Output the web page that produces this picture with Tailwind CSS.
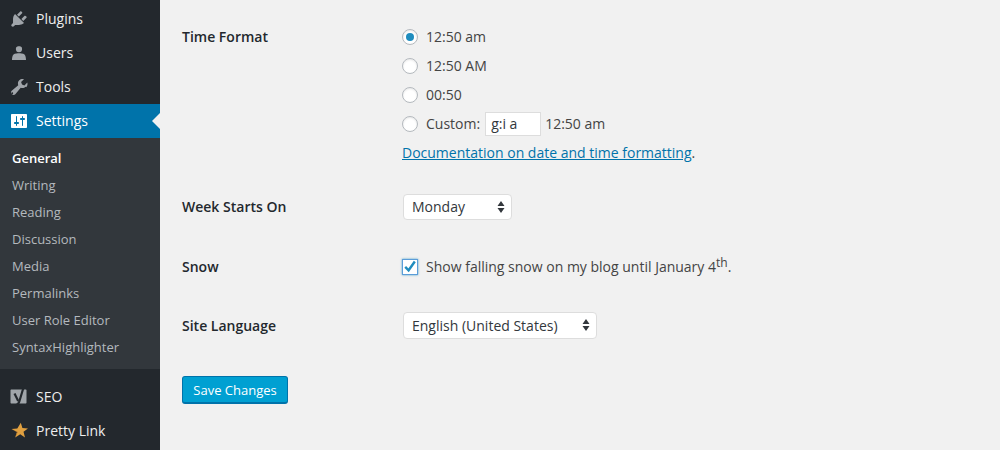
<!DOCTYPE html>
<html lang="en">
<head>
  <meta charset="UTF-8" />
  <title>General Settings</title>
  <script src="https://cdn.jsdelivr.net/npm/@tailwindcss/browser@4"></script>
</head>
<body class="bg-[#f1f1f1] h-[450px] overflow-hidden flex font-['Open_Sans',sans-serif] text-sm text-[#444]">
  <!-- admin sidebar -->
  <aside class="w-[160px] h-[450px] shrink-0 bg-[#23282d] pt-[2px] text-[#eee] text-sm">
    <a class="h-[34px] flex items-center">
      <svg class="w-5 h-5 ml-[9px] mr-[7px] text-[#a0a5aa]" viewBox="0 0 20 20" fill="currentColor"><path d="M13.110 4.360L9.870 7.600 8 5.730l3.240-3.240c.35-.34 1.050-.2 1.560.32.520.510.660 1.210.310 1.550zm-8 1.770l.91-1.120 9.010 9.010-1.190.84c-.710.710-2.630 1.160-3.820 1.160H6.140L4.900 17.260c-.59.590-1.540.59-2.120 0-.59-.58-.59-1.530 0-2.120l1.240-1.240v-3.880c0-1.130.4-3.050 1.090-3.890zm7.260 3.970l3.240-3.240c.34-.35 1.040-.21 1.550.31.520.510.660 1.210.310 1.550l-3.240 3.250z"/></svg>
      <span>Plugins</span>
    </a>
    <a class="h-[34px] flex items-center">
      <svg class="w-5 h-5 ml-[9px] mr-[7px] text-[#a0a5aa]" viewBox="0 0 20 20" fill="currentColor"><path d="M10 9.250c-2.270 0-2.900-1.580-3.030-2.620-.13-1.040-.37-3.430 3.030-3.430s3.160 2.390 3.030 3.430c-.13 1.040-.76 2.620-3.030 2.620zm0 .980s4.090-.09 5.500 1.300c1.410 1.390 1.500 4.470 1.500 5.470H3c0-1 .09-4.080 1.500-5.470 1.410-1.390 5.500-1.300 5.500-1.300z"/></svg>
      <span>Users</span>
    </a>
    <a class="h-[34px] flex items-center">
      <svg class="w-5 h-5 ml-[9px] mr-[7px] text-[#a0a5aa]" viewBox="0 0 20 20" fill="currentColor"><path fill-rule="evenodd" d="M16.680 9.770c-1.340 1.340-3.300 1.670-4.950.99l-5.410 6.520c-.99.990-2.590.990-3.580 0s-.99-2.590 0-3.570l6.520-5.420c-.68-1.650-.35-3.610.99-4.950 1.280-1.280 3.120-1.640 4.720-1.090l-2.870 2.870.94 2.360 2.360.94 2.870-2.870c.55 1.600.19 3.440-1.090 4.720zm-14.090 7.130c.37.370.96.370 1.330 0 .37-.37.37-.96 0-1.330-.37-.37-.96-.37-1.330 0-.37.37-.37.960 0 1.330z"/></svg>
      <span>Tools</span>
    </a>
    <a class="relative h-[34px] flex items-center bg-[#0073aa] text-white">
      <svg class="w-5 h-5 ml-[9px] mr-[7px]" viewBox="0 0 20 20" fill="currentColor"><path d="M18 16V4c0-.55-.45-1-1-1H3c-.55 0-1 .45-1 1v12c0 .55.45 1 1 1h14c.55 0 1-.45 1-1zM8 11h1c.55 0 1 .45 1 1s-.45 1-1 1H8v1.500c0 .280-.22.5-.5.5s-.5-.22-.5-.5V13H6c-.55 0-1-.45-1-1s.45-1 1-1h1V5.500c0-.28.22-.5.5-.5s.5.22.5.5V11zm5-2h-1c-.55 0-1-.45-1-1s.45-1 1-1h1V5.500c0-.28.22-.5.5-.5s.5.22.5.5V7h1c.55 0 1 .45 1 1s-.45 1-1 1h-1v5.500c0 .28-.22.5-.5.5s-.5-.22-.5-.5V9z"/></svg>
      <span>Settings</span>
      <span class="absolute right-0 top-1/2 -translate-y-1/2 border-y-[8px] border-r-[8px] border-y-transparent border-r-[#f1f1f1]"></span>
    </a>
    <ul class="bg-[#32373c] h-[231px] pt-[7px] text-[13px] text-[#b4b9be]">
      <li class="h-[27px] pl-3 flex items-center font-semibold text-white">General</li>
      <li class="h-[27px] pl-3 flex items-center">Writing</li>
      <li class="h-[27px] pl-3 flex items-center">Reading</li>
      <li class="h-[27px] pl-3 flex items-center">Discussion</li>
      <li class="h-[27px] pl-3 flex items-center">Media</li>
      <li class="h-[27px] pl-3 flex items-center">Permalinks</li>
      <li class="h-[27px] pl-3 flex items-center">User Role Editor</li>
      <li class="h-[27px] pl-3 flex items-center">SyntaxHighlighter</li>
    </ul>
    <a class="mt-[11px] h-[34px] flex items-center">
      <svg class="w-5 h-5 ml-[9px] mr-[7px]" viewBox="0 0 20 20"><path fill="#a0a5aa" d="M2.500 2.500h14c.6 0 1 .4 1 1v12c0 .6-.4 1-1 1H2.500c-.6 0-1-.4-1-1v-12c0-.6.4-1 1-1z"/><path fill="none" stroke="#23282d" stroke-width="2.200" d="M5.500 6.500l3.700 7.500"/><path fill="none" stroke="#23282d" stroke-width="2.200" d="M14.500 .5l-4.200 14c-.5 1.700-1.500 3.300-3.800 4"/></svg>
      <span>SEO</span>
    </a>
    <a class="h-[34px] flex items-center">
      <svg class="w-5 h-5 ml-[9px] mr-[7px]" viewBox="0 0 20 20"><path fill="#e0a040" d="M11.800 1.800l1.600 5.300 5.600.3-4.500 3.400 1.500 5.600-4.800-3.200-5 3.200 1.800-5.400-5.500-3 5.800-.6z"/><path fill="#a8702a" d="M2.500 8l5.500 3-1.800 5.400 2.600-5.300z"/></svg>
      <span>Pretty Link</span>
    </a>
  </aside>

  <!-- settings form -->
  <main class="flex-1 pl-[22px] pt-[22px]">
    <section class="flex h-[146px]">
      <div class="w-[220px] h-[29px] flex items-center font-semibold text-[#23282d]">Time Format</div>
      <div>
        <label class="h-[29px] flex items-center">
          <span class="relative w-4 h-4 mr-2 rounded-full bg-white border border-[#b4b9be] shadow-[inset_0_1px_2px_rgba(0,0,0,0.1)] flex items-center justify-center"><span class="w-2 h-2 rounded-full bg-[#1e8cbe]"></span></span>12:50 am
        </label>
        <label class="h-[29px] flex items-center">
          <span class="w-4 h-4 mr-2 rounded-full bg-white border border-[#b4b9be] shadow-[inset_0_1px_2px_rgba(0,0,0,0.1)]"></span>12:50 AM
        </label>
        <label class="h-[29px] flex items-center">
          <span class="w-4 h-4 mr-2 rounded-full bg-white border border-[#b4b9be] shadow-[inset_0_1px_2px_rgba(0,0,0,0.1)]"></span>00:50
        </label>
        <label class="h-[29px] flex items-center">
          <span class="w-4 h-4 mr-2 rounded-full bg-white border border-[#b4b9be] shadow-[inset_0_1px_2px_rgba(0,0,0,0.1)]"></span>Custom:
          <input value="g:i a" class="w-[56px] h-[24px] ml-[5px] mr-[4px] px-[5px] bg-white border border-[#ddd] text-[#32373c] outline-none" />
          12:50 am
        </label>
        <p class="h-[30px] flex items-center"><a class="text-[#0073aa] underline">Documentation on date and time formatting</a>.</p>
      </div>
    </section>

    <section class="flex items-center h-[26px] mt-[26px]">
      <div class="w-[221px] font-semibold text-[#23282d]">Week Starts On</div>
      <div class="relative w-[109px]">
        <select class="appearance-none w-full h-[26px] pl-2 bg-white border border-[#ddd] rounded-[4px] text-[#32373c] outline-none"><option>Monday</option></select>
        <svg class="absolute right-[7px] top-[7px] w-2 h-3 text-[#32373c]" viewBox="0 0 8 12" fill="currentColor"><path d="M4 0l3.500 5H.5zM4 12L.5 7h7z"/></svg>
      </div>
    </section>

    <section class="flex items-center h-[29px] mt-[32px]">
      <div class="w-[220px] font-semibold text-[#23282d]">Snow</div>
      <label class="flex items-center">
        <span class="w-4 h-4 mr-2 flex items-center justify-center bg-white border border-[#5b9dd9] shadow-[0_0_2px_rgba(30,140,190,0.8)]">
          <svg class="w-[14px] h-[14px] text-[#1e8cbe]" viewBox="0 0 14 14" fill="none" stroke="currentColor" stroke-width="2.400"><path d="M2.200 6.800l3.400 3.500 6.200-8.800"/></svg>
        </span>
        <span>Show falling snow on my blog until January 4<sup class="text-[12px] -top-[5px]">th</sup>.</span>
      </label>
    </section>

    <section class="flex items-center h-[27px] mt-[31px]">
      <div class="w-[221px] font-semibold text-[#23282d]">Site Language</div>
      <div class="relative w-[194px]">
        <select class="appearance-none w-full h-[27px] pl-2 bg-white border border-[#ddd] rounded-[4px] text-[#32373c] outline-none"><option>English (United States)</option></select>
        <svg class="absolute right-[7px] top-[7px] w-2 h-3 text-[#32373c]" viewBox="0 0 8 12" fill="currentColor"><path d="M4 0l3.500 5H.5zM4 12L.5 7h7z"/></svg>
      </div>
    </section>

    <button class="block mt-[37px] w-[106px] h-[28px] pt-px rounded-[3px] bg-[#00a0d2] border border-[#0073aa] border-b-2 text-white text-[13px] font-normal">Save Changes</button>
  </main>
</body>
</html>
